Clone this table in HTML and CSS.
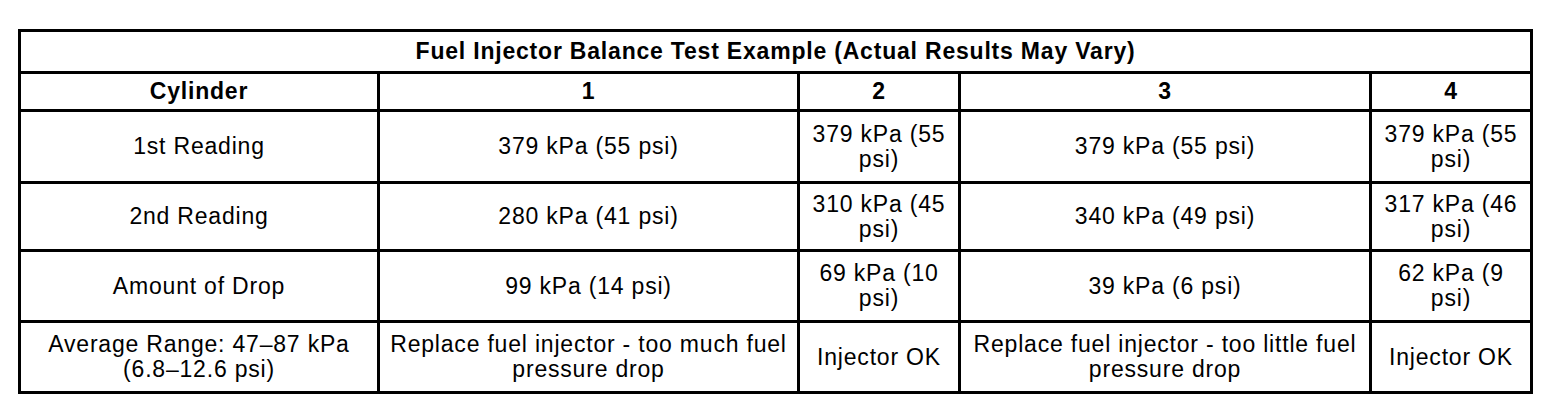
FILE: index.html
```html
<!DOCTYPE html>
<html lang="en">
<head>
<meta charset="utf-8">
<title>Fuel Injector Balance Test Example</title>
<link rel="stylesheet" href="styles.css">
</head>
<body>
<table class="spec">
  <colgroup>
    <col class="c-label">
    <col class="c-wide">
    <col class="c-narrow">
    <col class="c-wide2">
    <col class="c-narrow">
  </colgroup>
  <thead>
    <tr class="r-title"><th colspan="5">Fuel Injector Balance Test Example (Actual Results May Vary)</th></tr>
    <tr class="r-head"><th>Cylinder</th><th>1</th><th>2</th><th>3</th><th>4</th></tr>
  </thead>
  <tbody>
    <tr class="r1"><td>1st Reading</td><td>379 kPa (55 psi)</td><td>379 kPa (55 psi)</td><td>379 kPa (55 psi)</td><td>379 kPa (55 psi)</td></tr>
    <tr class="r2"><td>2nd Reading</td><td>280 kPa (41 psi)</td><td>310 kPa (45 psi)</td><td>340 kPa (49 psi)</td><td>317 kPa (46 psi)</td></tr>
    <tr class="r3"><td>Amount of Drop</td><td>99 kPa (14 psi)</td><td>69 kPa (10 psi)</td><td>39 kPa (6 psi)</td><td>62 kPa (9 psi)</td></tr>
    <tr class="r4"><td>Average Range: 47–87 kPa (6.8–12.6 psi)</td><td>Replace fuel injector - too much fuel pressure drop</td><td>Injector OK</td><td>Replace fuel injector - too little fuel pressure drop</td><td>Injector OK</td></tr>
  </tbody>
</table>
</body>
</html>
```

FILE: styles.css
```css
html, body {
  margin: 0;
  padding: 0;
  background: #ffffff;
}
body {
  padding: 29px 0 0 18px;
  font-family: "Liberation Sans", Arial, sans-serif;
  color: #000000;
}
.spec {
  border-collapse: collapse;
  table-layout: fixed;
  width: 1515px;
  font-size: 23px;
  letter-spacing: 0.8px;
  line-height: 25px;
}
.c-label { width: 359px; }
.c-wide { width: 420px; }
.c-narrow { width: 161px; }
.c-wide2 { width: 411px; }
.spec th, .spec td {
  border: 3px solid #000000;
  text-align: center;
  vertical-align: middle;
  padding: 0 6px;
}
.spec th {
  font-weight: bold;
}
.r-title { height: 42px; }
.r-head { height: 38px; }
.r1 { height: 72px; }
.r2 { height: 68px; }
.r3 { height: 71px; }
.r4 { height: 71px; }
```
